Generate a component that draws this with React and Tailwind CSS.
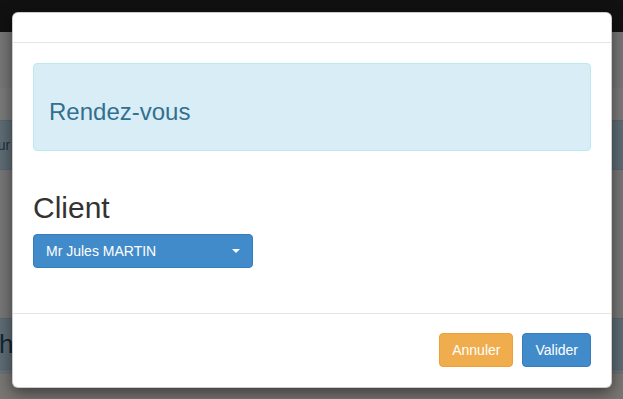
export default function App() {
  return (
    <div className="relative w-[623px] h-[399px] overflow-hidden font-['Liberation_Sans',Arial,sans-serif] text-[14px] text-[#333]">
      {/* Page behind the modal */}
      <div className="flex flex-col h-full bg-[#eee]">
        <div className="h-[32px] bg-[#222]" />
        <div className="h-[56px]" />
        <div className="h-[32px] bg-[#f4f4f4]" />
        <div className="h-[50px] bg-[#bdd9e9] border-y border-[#aecfe0] flex items-center">
          <span className="text-[#3f6580] text-[14px] -ml-[10px]">our</span>
        </div>
        <div className="h-[148px]" />
        <div className="h-[52px] bg-[#bcd8e8] border-y border-[#aecfe0] flex items-center">
          <span className="text-[#1f4e6e] text-[26px] -ml-[14px]">ch</span>
        </div>
        <div className="h-[4px] bg-[#d4e5ee]" />
        <div className="flex-1 bg-[#f2efe8]" />
      </div>

      {/* Backdrop */}
      <div className="absolute inset-0 bg-black/50" />

      {/* Modal */}
      <div className="absolute inset-0 pl-[12px] pt-[12px]">
        <div className="w-[600px] bg-white rounded-[6px] border border-black/20 shadow-[0_5px_15px_rgba(0,0,0,0.5)]">
          <div className="h-[30px] border-b border-[#e5e5e5]" />
          <div className="px-[20px] pt-[20px] pb-[45px]">
            <div className="bg-[#d9edf7] border border-[#bce8f1] rounded-[4px] px-[15px] py-[15px]">
              <h3 className="mt-[20px] mb-[10px] text-[24px] leading-[1.1] text-[#31708f]">Rendez-vous</h3>
            </div>
            <h2 className="mt-[40px] mb-[10px] text-[30px] leading-[1.1] text-[#333]">Client</h2>
            <button className="w-[220px] h-[34px] flex items-center justify-between px-[12px] bg-[#428bca] border border-[#357ebd] rounded-[4px] text-white text-[14px]">
              <span>Mr Jules MARTIN</span>
              <span className="w-0 h-0 border-t-[4px] border-t-white border-x-[4px] border-x-transparent" />
            </button>
          </div>
          <div className="border-t border-[#e5e5e5] pt-[19px] pb-[20px] px-[20px] flex justify-end gap-[9px]">
            <button className="h-[34px] px-[12px] bg-[#f0ad4e] border border-[#eea236] rounded-[4px] text-white text-[14px]">
              Annuler
            </button>
            <button className="h-[34px] px-[12px] bg-[#428bca] border border-[#357ebd] rounded-[4px] text-white text-[14px]">
              Valider
            </button>
          </div>
        </div>
      </div>
    </div>
  )
}
